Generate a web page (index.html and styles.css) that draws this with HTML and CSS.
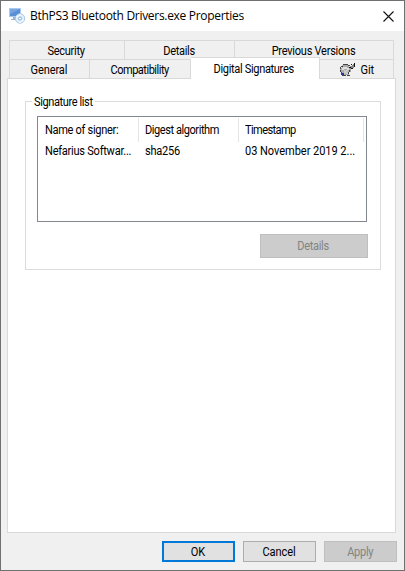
FILE: index.html
```html
<!DOCTYPE html>
<html lang="en">
<head>
<meta charset="utf-8">
<title>BthPS3 Bluetooth Drivers.exe Properties</title>
<link rel="stylesheet" href="styles.css">
</head>
<body>
<main class="window">
  <header class="titlebar">
    <svg class="app-icon" width="17" height="17" viewBox="0 0 17 17">
      <path d="M0 0h12v9H0z" fill="#a9c9ee"/><path d="M1 1h10v7H1z" fill="#5a8fd6"/><path d="M1 1h10L1 6z" fill="#76a5e0"/>
      <path d="M4 9h4v2h1v1H2v-1h2z" fill="#9db4cf"/>
      <circle cx="11" cy="10.5" r="4.7" fill="#e4eff9" stroke="#a5c6e6"/><path d="M11 6v9M7.5 8l7 5" stroke="#f5faff" stroke-width="1.5"/>
      <circle cx="11" cy="10.5" r="1.6" fill="#fff" stroke="#78addd"/>
    </svg>
    <h1 class="title">BthPS3 Bluetooth Drivers.exe Properties</h1>
    <svg class="close" width="11" height="11" viewBox="0 0 11 11"><path d="M.5.5l10 10M10.5.5l-10 10" stroke="#111" stroke-width="1.1"/></svg>
  </header>
  <nav class="tabs">
    <div class="row back">
      <span class="tab"><span class="t t-security">Security</span></span>
      <span class="tab"><span class="t t-details">Details</span></span>
      <span class="tab"><span class="t t-previous">Previous Versions</span></span>
    </div>
    <div class="row front">
      <span class="tab"><span class="t t-general">General</span></span>
      <span class="tab"><span class="t t-compat">Compatibility</span></span>
      <span class="tab active"><span class="t t-digital">Digital Signatures</span></span>
      <span class="tab git">
        <svg width="16" height="14" viewBox="0 0 16 14" shape-rendering="crispEdges">
          <path d="M3 2h7v2h2v5h-2v3H3V9H1V5h2z" fill="#aaa"/>
          <path d="M4 4h4v1h2v2H8V6H5v1H3V5h1z" fill="#e1e1e1"/>
          <path d="M4 1h5v1H4zM2 3h2v1H2zM1 4h1v2H1zM1 7h1v2H1zM2 9h1v3H2zM3 12h4v1H3zM9 2h2v1H9zM10 7h1v2h-1zM9 9h1v2H9zM8 12h3v1H8z" fill="#444"/>
          <path d="M11 3h2V2h2v3h-2v1h-2z" fill="#888"/><path d="M12 1h1v1h-1zM15 0h1v4h-1zM12 5h2v1h-2zM10 4h2v1h-2z" fill="#111"/>
          <path d="M3 10h2v2H3z" fill="#30349f"/><path d="M14 1h1v2h-1z" fill="#22a5b0"/><path d="M5 7h4v4H5z" fill="#c8c8c8"/>
        </svg>
        <span class="t t-git">Git</span>
      </span>
    </div>
  </nav>
  <section class="panel">
    <div class="group">
      <h2 class="legend"><span class="t t-legend">Signature list</span></h2>
      <div class="list">
        <div class="list-row head">
          <span class="cell"><span class="t t-name">Name of signer:</span></span>
          <span class="cell"><span class="t t-digest">Digest algorithm</span></span>
          <span class="cell"><span class="t t-stamp">Timestamp</span></span>
        </div>
        <div class="list-row">
          <span class="cell"><span class="t t-nefarius">Nefarius Softwar...</span></span>
          <span class="cell"><span class="t t-sha">sha256</span></span>
          <span class="cell"><span class="t t-date">03 November 2019 2...</span></span>
        </div>
      </div>
      <button class="button details" disabled><span class="t t-details">Details</span></button>
    </div>
  </section>
  <footer class="actions">
    <button class="button default"><span class="t t-ok">OK</span></button>
    <button class="button"><span class="t t-cancel">Cancel</span></button>
    <button class="button" disabled><span class="t t-apply">Apply</span></button>
  </footer>
</main>
</body>
</html>
```
FILE: styles.css
```css
* { box-sizing: border-box; }
body { margin: 0; color: #000; font: 12px/14px Roboto, "Liberation Sans", sans-serif; }
.window { width: 405px; height: 571px; border: 1px solid #707070; background: #f0f0f0; display: flex; flex-direction: column; }
.titlebar { height: 30px; background: #fff; display: flex; align-items: center; padding: 0 10px 0 8px; flex: none; }
.app-icon { margin-right: 4px; }
.title { margin: 0; flex: 1; font: 12px/16px "Open Sans", sans-serif; letter-spacing: -0.3px; white-space: nowrap; }
.tabs { margin: 9px 10px 0 8px; flex: none; }
.row { display: grid; height: 19px; border-left: 1px solid #d9d9d9; }
.back { grid-template-columns: 115px 110px 159px; }
.front { grid-template-columns: 80px 101px 129px 74px; }
.tab { border: solid #d9d9d9; border-width: 1px 1px 0 0; display: flex; align-items: center; justify-content: center; white-space: nowrap; padding: 2px 1px 0 0; }
.back .tab:first-child, .front .tab:first-child { padding-right: 2px; }
.active { background: #fff; margin: -2px 0 -1px; padding: 2px 2px 2px 0; position: relative; }
.git { gap: 5px; padding-right: 0; }
.panel { width: 389px; height: 455px; margin-left: 6px; padding: 22px 14px 0 17px; background: #fff; border: 1px solid #d9d9d9; flex: none; }
.group { height: 169px; border: 1px solid #dcdcdc; padding: 0 13px 0 11px; display: flex; flex-direction: column; }
.legend { width: 63px; height: 14px; margin: -7px 0 7px -5px; padding-left: 2px; background: #fff; font: inherit; white-space: nowrap; flex: none; }
.list { height: 106px; border: 1px solid #828790; padding: 1px 0; }
.list-row { display: grid; grid-template-columns: 101px 100px 125px; height: 17px; align-items: center; white-space: nowrap; }
.list-row.head { height: 24px; align-items: stretch; }
.cell { padding-left: 7px; }
.cell:nth-child(2), .cell:nth-child(3) { padding-left: 6px; }
.head .cell { border-right: 1px solid #e5e5e5; padding-top: 5px; }
.button { width: 73px; height: 21px; padding: 0 1px 0 0; border: 1px solid #adadad; background: #e1e1e1; color: #000; font: inherit; display: flex; align-items: center; justify-content: center; }
.button:disabled { background: #ccc; border-color: #bfbfbf; color: #838383; }
.default { border: 2px solid #0078d7; }
.details { width: 108px; height: 24px; margin: 12px -1px 0 auto; }
.actions { display: flex; justify-content: flex-end; gap: 8px; padding: 8px 7px 0 0; }
.t { display: inline-block; transform: scaleX(0.92); }
.legend .t, .cell .t { transform-origin: left; }
.t-security { letter-spacing: -0.35px; }
.t-details { letter-spacing: -0.36px; }
.t-previous { letter-spacing: -0.28px; }
.t-general { letter-spacing: -0.14px; }
.t-compat { letter-spacing: -0.55px; }
.t-digital { letter-spacing: -0.36px; }
.t-git { letter-spacing: -0.1px; }
.t-legend { letter-spacing: -0.43px; }
.t-name { letter-spacing: -0.34px; }
.t-digest { letter-spacing: -0.48px; }
.t-stamp { letter-spacing: -0.65px; }
.t-nefarius { letter-spacing: -0.27px; }
.t-sha { letter-spacing: -0.25px; }
.t-date { letter-spacing: -0.05px; }
.t-cancel { letter-spacing: -0.1px; }
.t-apply { letter-spacing: -0.3px; }
```
